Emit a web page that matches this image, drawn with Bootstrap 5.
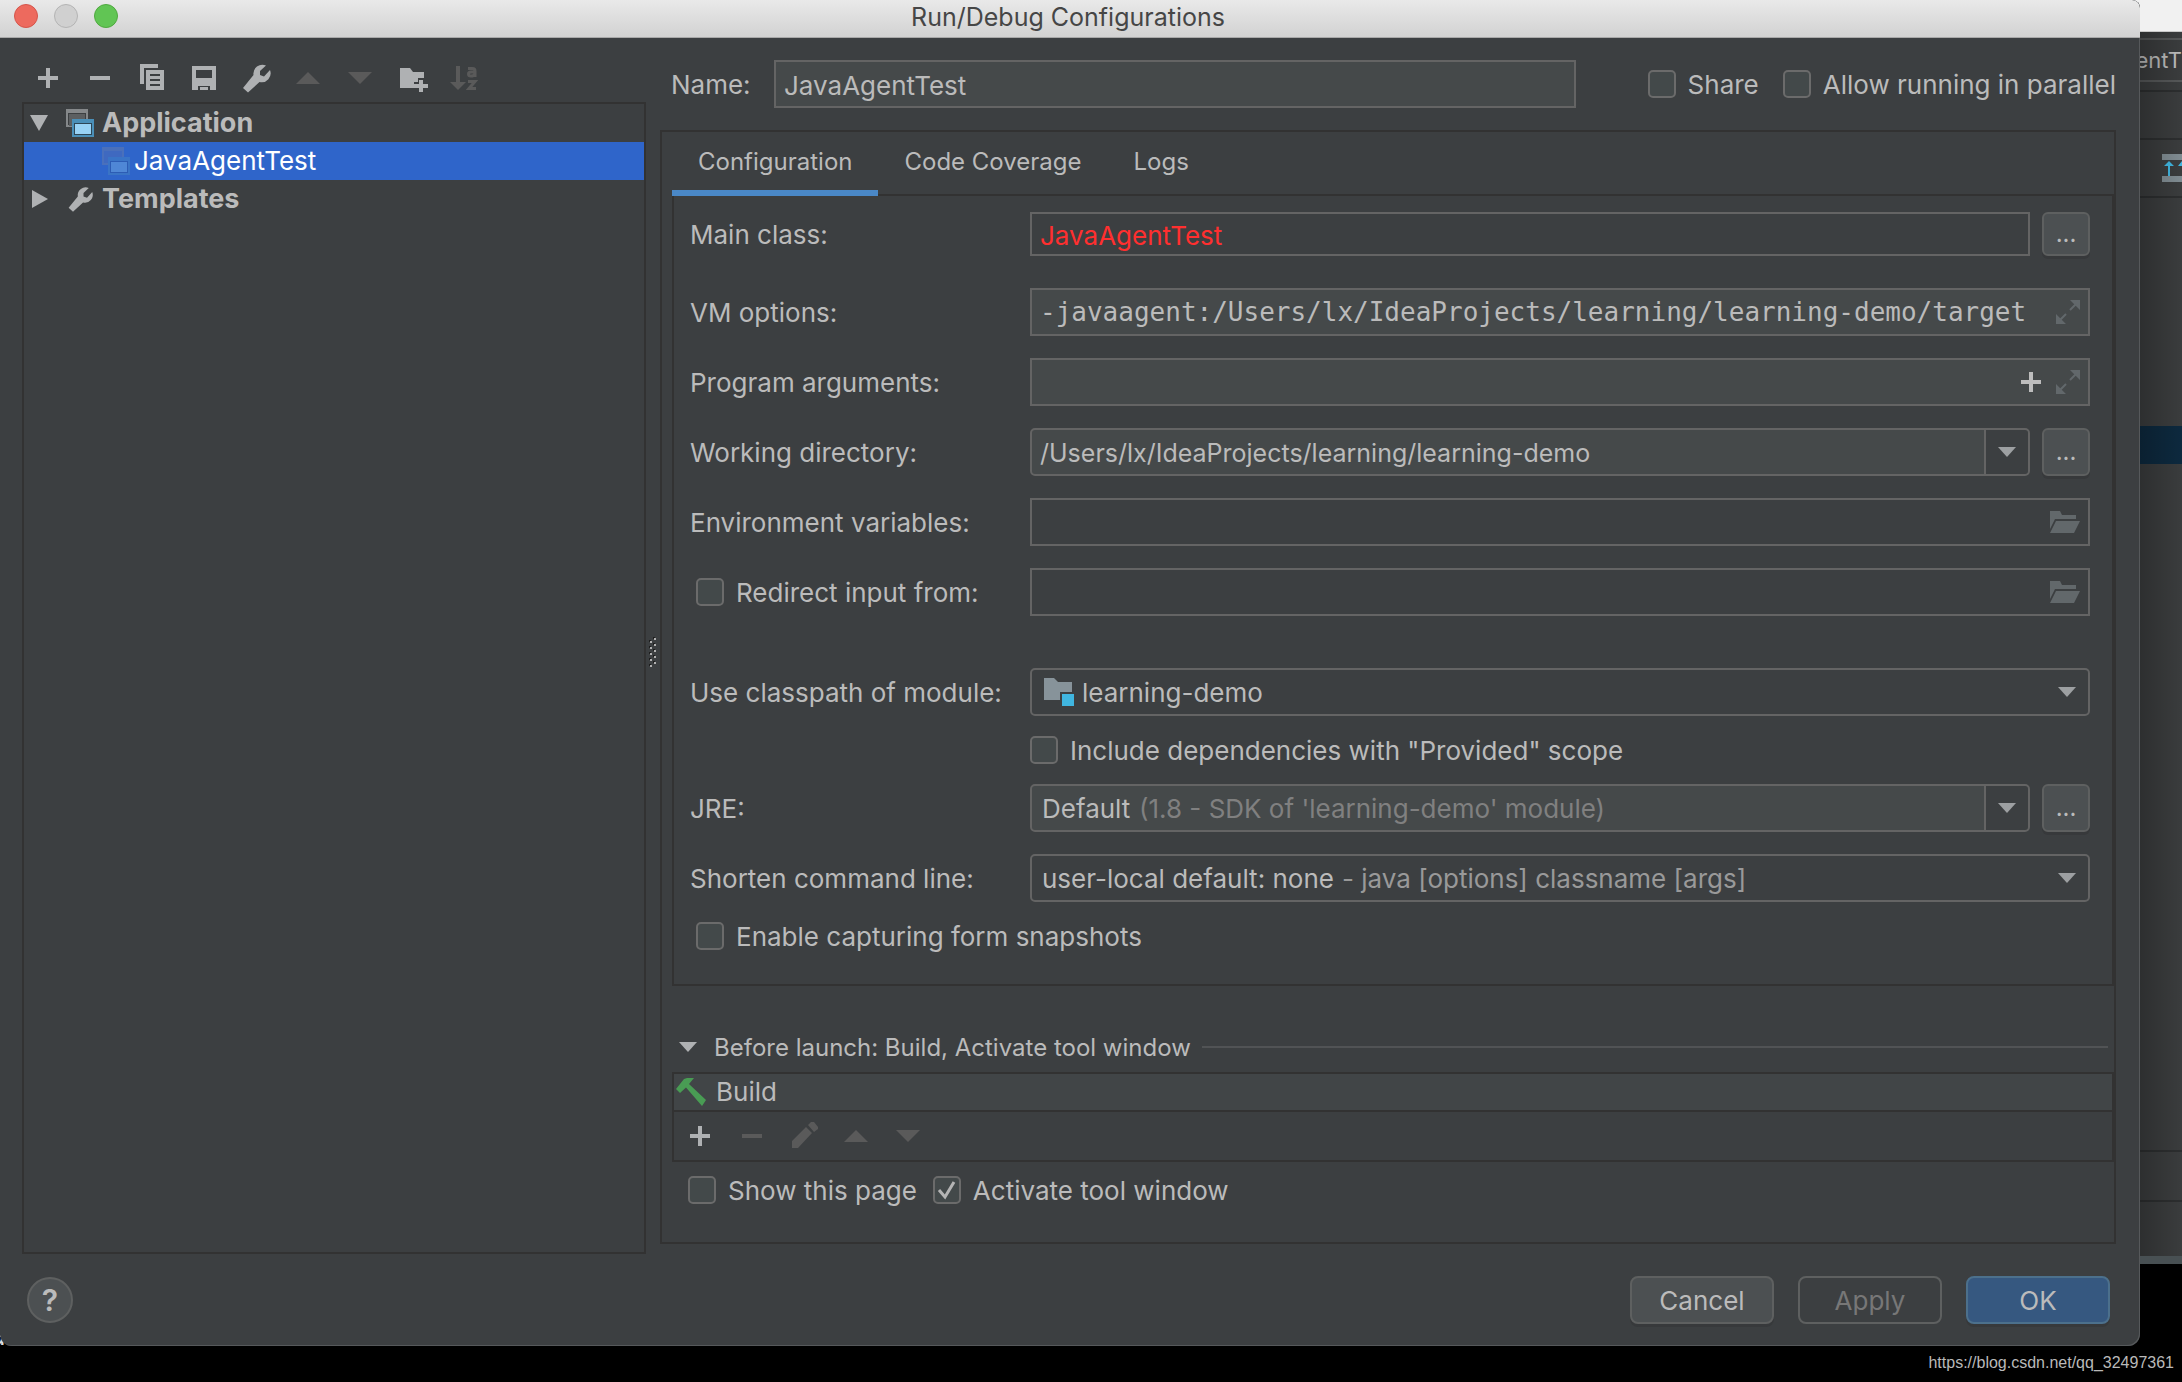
<!DOCTYPE html>
<html lang="en">
<head>
<meta charset="utf-8">
<meta name="viewport" content="width=device-width, initial-scale=1">
<title>Run/Debug Configurations</title>
<link href="https://cdn.jsdelivr.net/npm/bootstrap@5.3.0/dist/css/bootstrap.min.css" rel="stylesheet">
<style>
:root{--ui:#3c3f41;--line:#323232;--edge:#646464;--field:#45494a;--ink:#bbbbbb;--glyph:#afb1b3;--off:#5a5a5a}
body{background:#000;color:var(--ink);font-family:Inter,"Liberation Sans",sans-serif;font-size:26px;line-height:32px;overflow-x:hidden}
svg{display:block;flex:none}
label{white-space:nowrap;padding-top:2px}
/* windows behind the dialog */
.desk{min-height:100vh}
.ide{position:absolute;top:0;right:0;width:50%;height:1264px;background:#3a3c3d;border-bottom:8px solid #485053;font-size:22px}
.ide-title{height:32px;background:#f1f1f1;border-bottom:1px solid #c8c8c8}
.ide-run{height:44px;margin-top:6px;border:2px solid #555758;border-right:0}
.ide-rule{border-top:2px solid #2c2e2f}
.ide-shade{position:absolute;top:32px;bottom:0;right:0;width:42px;background:linear-gradient(90deg,rgba(0,0,0,.22),rgba(0,0,0,0))}
.ide-sel{height:38px;background:#0d293e;margin-top:228px;margin-bottom:686px}
.term{position:absolute;left:-10px;top:1318px;font:26px/36px "DejaVu Sans Mono",monospace;color:#ddd}
/* dialog */
.dialog{position:relative;margin-right:42px;background:var(--ui);border-radius:0 8px 12px 12px;overflow:hidden;box-shadow:inset -1px -1px 0 #56595b}
.titlebar{height:38px;background:linear-gradient(#e9e9e9,#d2d2d2);border-bottom:1px solid #a9a9a9;color:#464646;padding:4px 14px 0;border-radius:0 8px 0 0}
.titlebar h1{font-size:25px;line-height:26px;font-weight:400;padding-right:108px}
.light{width:24px;height:24px;border-radius:50%;border:1px solid #b4b4b4;background:#d0d0d0;padding:0}
.light.red{background:#ed6a5e;border-color:#d5554b}
.light.green{background:#61c554;border-color:#4fa93f}
.lights{width:104px}
.side{width:624px;padding-top:24px}
.tool{background:none;border:0;padding:0;color:var(--glyph)}
.tool:disabled{color:var(--off)}
.tools{gap:20px;padding-left:10px}
.tree{border:2px solid var(--line);margin-top:8px}
.node{height:38px;gap:8px;padding-left:6px;font-weight:700;font-size:27px;color:var(--ink)}
.node.leaf{background:#2f65ca;color:#fff;font-weight:400;font-size:26px;padding-left:78px;gap:4px}
.twist{width:18px;margin-right:10px}
.grip{width:14px;padding:12px 2px 0 0}
.main{padding-top:22px;margin-bottom:10px;min-width:0}
.name-row{padding-left:11px;height:48px}
.name-row>label{width:103px}
.field{height:48px;border:2px solid var(--edge);min-width:0}
.field input,.field select{background:transparent;border:0;outline:0;color:inherit;padding:2px 0 0 8px;margin:0;min-width:0;height:44px;line-height:32px}
.field span{padding-top:2px}
.field select{appearance:none}
.field select option{background:var(--field)}
.field.lit{background:var(--field)}
.field.combo{border-radius:5px}
.field .drop{width:44px;align-self:stretch;background:var(--ui);border:0;border-left:2px solid var(--edge);padding:0;color:#9da0a2;border-radius:0 4px 4px 0}
.field .more{gap:15px;padding-right:8px;color:#62686b}
.field .pathtext{font-size:25px}
.field .lead-in{margin-left:2px}
.field .modtext{padding-left:6px}
.arrow{color:#9da0a2;margin-right:12px}
.field .mono-in{font:26px/32px "DejaVu Sans Mono",monospace;padding-top:0}
.short{height:44px}
.short input{height:40px}
.pick{width:48px;margin-left:12px;background:#4c5052;border:2px solid #5e6060;border-radius:6px;color:var(--ink);padding:0;box-shadow:0 3px 0 #37393b;line-height:40px;font-size:24px}
.chk{appearance:none;width:28px;height:28px;margin:0;border:2px solid #6b6b6b;border-radius:5px;background:#43494a center/24px 24px no-repeat;flex:none}
.chk:checked{background-image:url("data:image/svg+xml,%3Csvg xmlns='http://www.w3.org/2000/svg' viewBox='0 0 24 24'%3E%3Cpath d='M4 12l6 7L19 4' fill='none' stroke='%23b4b4b4' stroke-width='3'/%3E%3C/svg%3E")}
.tick{gap:12px;height:28px}
.frame{border:2px solid var(--line);margin-top:22px;padding:0 0 38px 10px}
.tabs{height:62px;font-size:24px}
.tabs .nav-link{color:var(--ink);padding:14px 26px 0;height:64px;border-radius:0;background:none;line-height:32px}
.tabs .nav-link.active{border-bottom:6px solid #4a88c7;position:relative}
.sheet{border:2px solid var(--line);padding:16px 22px 34px 16px}
.line{margin-bottom:22px}
.line>label,.line>.tick{width:340px;flex:none}
.line>.tick{padding-left:6px}
.gap-l{margin-bottom:32px}.gap-xl{margin-bottom:52px}.gap-s{margin-bottom:20px}
.dim{color:#808080}.soft{color:#999}
.launch{margin-top:44px;margin-bottom:8px;height:34px;font-size:24px;padding:0 6px 0 7px}
.launch span{padding:2px 0 0 17px}
.launch hr{border-top:2px solid #515355;opacity:1;margin:0 0 0 11px}
.tasks{border:2px solid var(--line)}
.task{height:36px;background:#414547;padding-left:2px;gap:10px}
.task-tools{height:50px;border-top:2px solid var(--line);padding-left:10px;gap:20px}
.after{padding:14px 0 0 16px;gap:16px}
.foot{padding:22px 30px 22px 27px}
.help{width:46px;height:46px;border-radius:50%;border:2px solid #5e6060;background:#4c5052;color:var(--ink);font-size:30px;line-height:42px;padding:0;font-weight:600}
.cmd{width:144px;height:48px;border:2px solid #5e6060;border-radius:8px;background:#4c5052;color:var(--ink);padding:2px 0 0;line-height:42px;box-shadow:0 3px 0 #37393b}
.cmd.go{background:#365880;border-color:#4c708c}
.cmd:disabled{background:none;color:#777;box-shadow:none}
.cmds{gap:24px}
.mark-url{color:#b9b9b9;font:16px/26px "Liberation Sans",Arial,sans-serif;padding:4px 8px 0}
</style>
</head>
<body>
<svg class="d-none" xmlns="http://www.w3.org/2000/svg">
  <symbol id="plus" viewBox="0 0 32 32"><path fill="currentColor" d="M14 6h4v8h8v4h-8v8h-4v-8H6v-4h8z"/></symbol>
  <symbol id="minus" viewBox="0 0 32 32"><path fill="currentColor" d="M6 14h20v4H6z"/></symbol>
  <symbol id="up" viewBox="0 0 32 32"><path fill="currentColor" d="M16 10l12 12H4z"/></symbol>
  <symbol id="down" viewBox="0 0 32 32"><path fill="currentColor" d="M4 10h24L16 22z"/></symbol>
  <symbol id="wrench" viewBox="0 0 32 32"><path fill="currentColor" d="M26 3.500l-6 5.500 0 4 4 1.500 6-6.500a9 9 0 0 1-10.500 12L8 30.500 3 26 13.500 13A9 9 0 0 1 26 3.500z"/></symbol>
  <symbol id="tri" viewBox="0 0 18 10"><path fill="currentColor" d="M0 0h18L9 10z"/></symbol>
  <symbol id="expand" viewBox="0 0 24 24"><path fill="currentColor" d="M14 0h10v10zM0 14l10 10H0z"/><path d="M20 4l-6 6M10 14l-6 6" stroke="currentColor" stroke-width="2"/></symbol>
  <symbol id="open" viewBox="0 0 30 22"><path fill="currentColor" d="M0 0h10l2 4h14v4H5L0 18zM6 10h24l-6 12H0z"/></symbol>
  <symbol id="app" viewBox="0 0 28 28"><path fill="#85888a" d="M0 0h22v18H0z"/><path fill="#3c3f41" d="M2 4h18v12H2z"/><path fill="#5c5f61" d="M3 5h16v12H3z"/><path fill="#4a8fb8" d="M6 10h22v18H6z"/><path fill="#2d4656" d="M8 14h18v12H8z"/><path fill="#98d2f5" d="M9 15h16v10H9z"/></symbol>
  <symbol id="app-run" viewBox="0 0 28 28"><path fill="#4a70bb" d="M0 0h22v18H0z"/><path fill="#3f69c0" d="M2 4h18v12H2z"/><path fill="#3a74c6" d="M6 10h22v18H6z"/><path fill="#2c5cb4" d="M8 14h18v12H8z"/><path fill="#4f87d6" d="M9 15h16v10H9z"/></symbol>
</svg>

<div class="desk">
  <div class="ide text-end">
    <div class="ide-title"></div>
    <div class="ide-run d-flex justify-content-end align-items-center"><span>entT</span></div>
    <div class="ide-rule mt-2"></div>
    <div class="ide-rule" style="margin-top:46px"></div>
    <svg class="ms-auto" style="margin-top:14px" width="20" height="28" viewBox="0 0 20 28"><path fill="#7f8b91" d="M0 0h20v6H0zM0 22h20v6H0z"/><path fill="#40b6e0" d="M7 7l5 5H8v10H6V12H2zM20 7v5h-4z"/></svg>
    <div class="ide-rule" style="margin-top:14px"></div>
    <div class="ide-sel"></div>
    <div class="ide-rule"></div>
    <div class="ide-rule" style="margin-top:48px"></div>
    <div class="ide-shade"></div>
  </div>
  <div class="term">att</div>

  <main class="dialog">
    <header class="titlebar d-flex align-items-start">
      <div class="lights d-flex gap-3"><button class="light red" aria-label="Close"></button><button class="light" aria-label="Minimize"></button><button class="light green" aria-label="Zoom"></button></div>
      <h1 class="flex-fill text-center m-0">Run/Debug Configurations</h1>
    </header>

    <div class="d-flex" style="padding:0 24px 0 22px">
      <aside class="side d-flex flex-column flex-shrink-0">
        <div class="tools d-flex">
          <button class="tool" aria-label="Add"><svg width="32" height="32"><use href="#plus"/></svg></button>
          <button class="tool" aria-label="Remove"><svg width="32" height="32"><use href="#minus"/></svg></button>
          <button class="tool" aria-label="Copy"><svg width="32" height="32" viewBox="0 0 32 32"><path fill="currentColor" fill-rule="evenodd" d="M4 2h18v4H8v16H4zM10 8h18v20H10zM14 12v2h10v-2zM14 17v2h10v-2zM14 22v2h10v-2z"/></svg></button>
          <button class="tool" aria-label="Save"><svg width="32" height="32" viewBox="0 0 32 32"><path fill="currentColor" fill-rule="evenodd" d="M4 4h24v24h-6v-4H10v4H4zM8 8v8h16V8zM12 25h8v3h-8z"/></svg></button>
          <button class="tool" aria-label="Edit templates"><svg width="32" height="32"><use href="#wrench"/></svg></button>
          <button class="tool" disabled aria-label="Move up"><svg width="32" height="32"><use href="#up"/></svg></button>
          <button class="tool" disabled aria-label="Move down"><svg width="32" height="32"><use href="#down"/></svg></button>
          <button class="tool" aria-label="New folder"><svg width="32" height="32" viewBox="0 0 32 32"><path fill="currentColor" d="M4 6h10l3 4h11v6h-6v4h-4v6H4zM23 18h4v4h5v4h-5v4h-4v-4h-5v-4h5z"/></svg></button>
          <button class="tool" disabled aria-label="Sort"><svg width="32" height="32" viewBox="0 0 32 32"><path fill="currentColor" d="M8 4h4v16h6l-8 8-8-8h6z"/><path fill="none" stroke="currentColor" stroke-width="3" d="M20 6.500h4.500q2.500 0 2.500 2.500v6M27 10h-4q-2.500 0-2.500 2t2.500 2q3 0 4-2M20 19.500h7l-6 7h7"/></svg></button>
        </div>
        <div class="tree flex-fill">
          <div class="node d-flex align-items-center"><svg class="twist" width="18" height="16" viewBox="0 0 18 16"><path fill="#afb1b3" d="M0 0h18L9 16z"/></svg><svg width="28" height="28"><use href="#app"/></svg><span>Application</span></div>
          <div class="node leaf d-flex align-items-center"><svg width="28" height="28"><use href="#app-run"/></svg><span>JavaAgentTest</span></div>
          <div class="node d-flex align-items-center"><svg class="twist" width="18" height="18" viewBox="0 0 18 18"><path fill="#afb1b3" d="M2 0l16 9L2 18z"/></svg><svg width="28" height="28" color="#afb1b3"><use href="#wrench"/></svg><span>Templates</span></div>
        </div>
      </aside>

      <div class="grip d-flex align-items-center justify-content-center flex-shrink-0"><svg width="8" height="30" viewBox="0 0 8 30"><path d="M2 3v27M6 0v30" stroke="#1e1e1e" stroke-width="2" stroke-dasharray="2 4"/><path d="M3 4v26M7 1v29" stroke="#b0b0b0" stroke-width="2" stroke-dasharray="2 4"/></svg></div>

      <section class="main flex-fill">
        <div class="name-row d-flex align-items-center">
          <label for="name">Name:</label>
          <div class="field lit d-flex flex-fill"><input id="name" class="flex-fill" value="JavaAgentTest"></div>
          <div class="tick d-flex align-items-center ms-5 ps-4"><input type="checkbox" class="chk" id="share"><label for="share">Share</label></div>
          <div class="tick d-flex align-items-center ms-4"><input type="checkbox" class="chk" id="par"><label for="par">Allow running in parallel</label></div>
        </div>

        <div class="frame">
          <nav class="tabs nav"><a href="#sheet" class="nav-link active">Configuration</a><a href="#sheet" class="nav-link">Code Coverage</a><a href="#sheet" class="nav-link">Logs</a></nav>
          <div class="sheet" id="sheet">
            <div class="line gap-l d-flex align-items-center"><label for="cls">Main class:</label><div class="field short d-flex flex-fill"><input id="cls" class="flex-fill" style="color:#ff2f2f" value="JavaAgentTest"></div><button class="pick short">...</button></div>
            <div class="line d-flex align-items-center"><label for="vm">VM options:</label><div class="field lit d-flex align-items-center flex-fill"><input id="vm" class="flex-fill mono-in" value="-javaagent:/Users/lx/IdeaProjects/learning/learning-demo/target"><div class="more ps-2"><svg width="24" height="24"><use href="#expand"/></svg></div></div></div>
            <div class="line d-flex align-items-center"><label for="args">Program arguments:</label><div class="field lit d-flex align-items-center flex-fill"><input id="args" class="flex-fill"><div class="more d-flex align-items-center"><svg width="20" height="20" viewBox="6 6 20 20" color="#bdbdbd"><use href="#plus" width="32" height="32"/></svg><svg width="24" height="24"><use href="#expand"/></svg></div></div></div>
            <div class="line d-flex align-items-center"><label for="wd">Working directory:</label><div class="field combo lit d-flex align-items-center flex-fill"><input id="wd" class="flex-fill pathtext" value="/Users/lx/IdeaProjects/learning/learning-demo"><button class="drop d-flex align-items-center justify-content-center" aria-label="Recent"><svg width="18" height="10"><use href="#tri"/></svg></button></div><button class="pick align-self-stretch">...</button></div>
            <div class="line d-flex align-items-center"><label for="env">Environment variables:</label><div class="field d-flex align-items-center flex-fill"><input id="env" class="flex-fill"><div class="more"><svg width="30" height="22"><use href="#open"/></svg></div></div></div>
            <div class="line gap-xl d-flex align-items-center"><div class="tick d-flex align-items-center"><input type="checkbox" class="chk" id="redir"><label for="redir">Redirect input from:</label></div><div class="field d-flex align-items-center flex-fill"><input aria-label="Input file" class="flex-fill"><div class="more"><svg width="30" height="22"><use href="#open"/></svg></div></div></div>
            <div class="line gap-s d-flex align-items-center"><label for="mod">Use classpath of module:</label><div class="field combo d-flex align-items-center flex-fill"><svg class="ms-2 ps-1" width="36" height="28" viewBox="0 0 32 28"><path fill="#87939a" d="M0 0h10l4 4h14v10H16v8H0z"/><path fill="#40b6e0" d="M18 16h12v12H18z"/></svg><select id="mod" class="flex-fill modtext"><option>learning-demo</option></select><svg class="arrow" width="18" height="10"><use href="#tri"/></svg></div></div>
            <div class="line gap-s d-flex"><label></label><div class="d-flex align-items-center tick ps-0"><input type="checkbox" class="chk" id="prov"><label for="prov">Include dependencies with "Provided" scope</label></div></div>
            <div class="line d-flex align-items-center"><label for="jre">JRE:</label><div class="field combo lit d-flex align-items-center flex-fill"><select id="jre" class="lead-in"><option>Default</option></select><span class="dim flex-fill ps-2">(1.8 - SDK of 'learning-demo' module)</span><button class="drop d-flex align-items-center justify-content-center" aria-label="Choose JRE"><svg width="18" height="10"><use href="#tri"/></svg></button></div><button class="pick align-self-stretch">...</button></div>
            <div class="line gap-s d-flex align-items-center"><label for="cmdl">Shorten command line:</label><div class="field combo d-flex align-items-center flex-fill"><select id="cmdl" class="lead-in"><option>user-local default: none</option></select><span class="soft flex-fill ps-2">- java [options] classname [args]</span><svg class="arrow" width="18" height="10"><use href="#tri"/></svg></div></div>
            <div class="tick d-flex align-items-center" style="padding-left:6px"><input type="checkbox" class="chk" id="snap"><label for="snap">Enable capturing form snapshots</label></div>
          </div>

          <div class="launch d-flex align-items-center"><svg width="18" height="10" color="#afb1b3"><use href="#tri"/></svg><span>Before launch: Build, Activate tool window</span><hr class="flex-fill"></div>
          <div class="tasks">
            <div class="task d-flex align-items-center"><svg width="30" height="28" viewBox="0 0 30 28"><path fill="#499c54" d="M8 1l3-1h7l-5 6 17 16-4 6L10 9.500 4 15 0 11z"/></svg><span>Build</span></div>
            <div class="task-tools d-flex align-items-center">
              <button class="tool" aria-label="Add task"><svg width="32" height="32"><use href="#plus"/></svg></button>
              <button class="tool" disabled aria-label="Remove task"><svg width="32" height="32"><use href="#minus"/></svg></button>
              <button class="tool" disabled aria-label="Edit task"><svg width="32" height="32" viewBox="0 0 32 32"><path fill="currentColor" d="M4 28v-7L18 7l6 6L10 28zM20 5l3-3h3l4 5v2l-4 3z"/></svg></button>
              <button class="tool" disabled aria-label="Task up"><svg width="32" height="32"><use href="#up"/></svg></button>
              <button class="tool" disabled aria-label="Task down"><svg width="32" height="32"><use href="#down"/></svg></button>
            </div>
          </div>
          <div class="after d-flex">
            <div class="tick d-flex align-items-center"><input type="checkbox" class="chk" id="show"><label for="show">Show this page</label></div>
            <div class="tick d-flex align-items-center"><input type="checkbox" class="chk" id="act" checked><label for="act">Activate tool window</label></div>
          </div>
        </div>
      </section>
    </div>

    <footer class="foot d-flex align-items-center justify-content-between">
      <button class="help" aria-label="Help">?</button>
      <div class="cmds d-flex"><button class="cmd">Cancel</button><button class="cmd" disabled>Apply</button><button class="cmd go">OK</button></div>
    </footer>
  </main>
  <div class="mark-url text-end">https://blog.csdn.net/qq_32497361</div>
</div>
<script src="https://cdn.jsdelivr.net/npm/bootstrap@5.3.0/dist/js/bootstrap.bundle.min.js"></script>
</body>
</html>
